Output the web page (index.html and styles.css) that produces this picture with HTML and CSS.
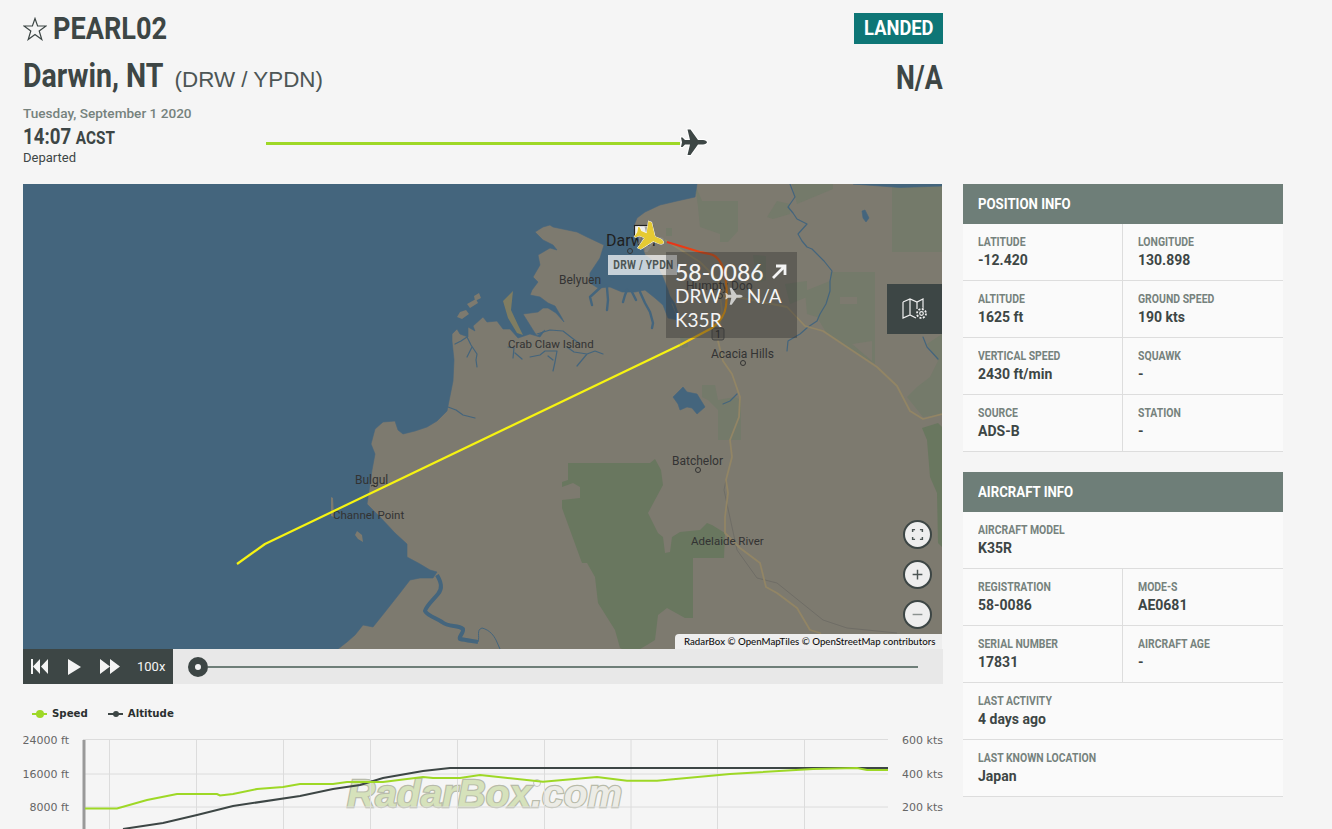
FILE: index.html
```html
<!DOCTYPE html>
<html lang="en">
<head>
<meta charset="utf-8">
<title>PEARL02 flight</title>
<link rel="stylesheet" href="styles.css">
</head>
<body>
<svg class="defs" width="0" height="0" aria-hidden="true">
  <symbol id="plane" viewBox="679 128 30 30">
    <path d="M707 143.300c0-1-2-2.200-4-2.200L698 141l-7.500-10.500h-3L690 141h-5l-2.500-2.500H681l1 4.800-1 4.700h1.500l2.500-2.500h5L687.500 156h3l7.500-10.500 5 0c2 0 4-1 4-2.200z"/>
  </symbol>
</svg>
<div class="page">
  <header class="head">
    <div class="row row-title">
      <h1 class="callsign">
        <svg class="star" viewBox="0 0 24 24"><polygon points="12,1.500 14.600,9 23,9 16.200,14 18.800,22.500 12,17.400 5.200,22.500 7.800,14 1,9 9.400,9"/></svg>
        <span class="cond">PEARL02</span>
      </h1>
      <span class="badge"><span class="badge-text">LANDED</span></span>
    </div>
    <div class="row row-route">
      <div class="origin"><span class="city cond">Darwin, NT</span><span class="codes">(DRW / YPDN)</span></div>
      <div class="city city-end">N/A</div>
    </div>
    <div class="date">Tuesday, September 1 2020</div>
    <div class="progress-row">
      <div class="dep">
        <div class="time">14:07 <span class="tz">ACST</span></div>
        <div class="dep-label">Departed</div>
      </div>
      <div class="progress-line"></div>
      <svg class="progress-plane"><use href="#plane"/></svg>
    </div>
  </header>

  <main class="main">
    <section class="map">
      <svg class="map-svg" viewBox="23 184 919 465">
        <rect class="land" x="23" y="184" width="919" height="465"/>
        <g class="park">
          <path d="M568 463H650L655 459L661 470L663 485L648 513L658 533L663 537L665 553L670 552L672 537L680 532L700 530L707 523L712 525L725 533L724 558H693V618H685L667 608L658 615L655 640L647 645L640 649H622L620 648L615 630L598 603L595 577L587 563H582L562 508V500L580 498V487L573 483L562 487V482L568 480Z"/>
          <path d="M922 428L938 423L942 427V547L938 543L937 493L930 477L927 440Z"/>
        </g>
        <g class="park park-soft">
          <path d="M702 385H715L718 400L735 397L741 400V440H718V410L708 400L702 397Z"/>
          <path d="M695 184L702 201H738V231L728 242H720V234L700 227L698 207Z"/>
          <path d="M792 184H833V189L797 204Z"/>
          <path d="M767 217L777 201L790 204V214L773 219Z"/>
          <path d="M892 186H942V252H892Z"/>
          <path d="M830 272H875V364L850 349L827 334L817 317L807 314L805 291L830 281Z"/>
          <path d="M785 284L807 281V297L790 304Z"/>
          <path d="M927 344L938 361L930 377L917 387L907 397L923 417L942 414V334Z"/>
          <path d="M753 255L766 256V280L757 283Z"/>
          <path d="M680 337L688 338V347L682 348Z"/>
          <path d="M666 228H672V236H666Z"/>
        </g>
        <path class="land" d="M840 297H857V304H840Z"/>
        <path class="land" d="M852 344L872 341V361Z"/>

        <path class="water" d="M23 184H697L695 197L677 201L660 205L645 212L637 218L633 228L640 240L645 255L655 262L662 275L668 290L672 305L678 320L668 318L663 305L655 298L645 290L635 292L622 292L610 287L598 288L590 283L590 273L600 258L604 245L587 237L577 232L553 227L550 225L543 227L535 232L543 240L553 245L557 250L550 248L538 255L540 265L533 277L538 282L532 290L530 295L540 297L548 303L555 306L562 318L564 322L556 313L548 308L543 308L538 312L523 314L528 322L533 330L537 336L545 330L540 337L530 334L518 338L510 329L503 329L497 321L487 322L483 317L473 326L475 331L468 327L468 337L460 334L457 329L452 334L452 341L454 360L453 381L447 411L437 421L427 427L415 431L403 434L398 430L395 421L383 422L375 429L371 444L375 454L372 470L370 484L367 504L380 517L395 533L407 544L407 557L420 564L430 570L437 572L433 578L420 578L410 580L400 593L385 612L373 627L363 625L355 635L347 642L338 649H23Z"/>
        <path class="water" d="M853 184H942V186L900 187.500Z"/>
        <path class="water" d="M673 397L683 387L687 392L697 394L705 407L697 414L692 408L687 407L680 410L678 404Z"/>
        <path class="water" d="M862 211L865 210L869 218L866 222L863 218Z"/>
        <path class="land" d="M460 312L466 310L469 314L462 319L457 317ZM467 304L476 299L478 303L470 308ZM474 296L479 293L481 298L475 301ZM357 531L362 535L363 542L358 539L355 535ZM331 497L333 498L334 517L331 516Z"/>
        <path class="mud" d="M503 301L513 291L511 310L518 325L523 335L517 333L508 318Z"/>

        <g class="river">
          <path d="M455 344L461 341L467 337L471 345L477 354L476 360L477 367M467 357L472 347M508 347L514 348L513 358M515 353L522 359M530 357L540 355L545 351L557 351L555 362L553 371M548 356L553 360M567 347L574 352L587 354L582 360L577 366M587 354L595 351L603 354M537 334L550 330L563 331L572 338L580 344M448 407L456 410L463 415L475 418M723 404L730 401L737 394"/>
          <path d="M790 184L795 197L788 207L793 213L797 219L807 224L798 234L802 241L807 247L812 249L817 254L824 261L832 271L830 281L830 291L826 304L820 314L817 321L808 327L800 334L788 341L787 351M923 337L927 347L938 359"/>
        </g>
        <path class="inlet" d="M640 292L645 303L650 312L653 323L652 328M627 290L625 295L623 302M607 288L608 300L607 310M613 277L603 285L590 297L592 305M632 292L636 300M668 295L674 304L678 316"/>
        <path class="river-wide" d="M437 575C441 582 443 588 438 594C433 600 426 606 425 611C428 616 436 618 442 622C449 628 458 624 463 629C464 633 458 637 460 639C465 640 472 641 478 642"/>
        <path class="river-thin" d="M478 642C480 636 476 630 482 628C490 630 494 636 496 640L500 649"/>
        <path class="rail" d="M737 550L757 578L777 583L823 620L847 628L897 633M726 480L724 490L737 550"/>
        <g class="road">
          <path d="M665 240L700 262L718 280L722 310L718 341L723 361L732 374L740 397L739 417L730 440L732 457L726 480L728 493L725 517L725 533L740 548L760 563L766 587L777 593L797 608L810 630L820 633L827 649"/>
          <path d="M722 296L737 297L787 307L805 326L823 331L847 347L877 367L897 386L910 411L923 419L942 414"/>
        </g>
        <g class="labels">
          <text x="559" y="284">Belyuen</text>
          <text class="label-s" x="508" y="348">Crab Claw Island</text>
          <text x="355" y="484">Bulgul</text>
          <text class="label-s" x="333" y="519">Channel Point</text>
          <text x="711" y="358">Acacia Hills</text>
          <text x="672" y="465">Batchelor</text>
          <text class="label-s" x="691" y="545">Adelaide River</text>
          <text x="686" y="290">Humpty Doo</text>
          <text class="label-city" x="606" y="246">Darwin</text>
        </g>
        <g class="dots">
          <circle cx="630" cy="251" r="2.500"/>
          <circle cx="743" cy="363" r="2.500"/>
          <circle cx="698" cy="470" r="2.500"/>
          <circle cx="720" cy="296" r="2.500"/>
          <path d="M371 486a3 3 0 0 1 4 0"/>
        </g>
        <rect class="shield" x="712" y="328" width="12" height="12" rx="2"/>
        <text class="shield-text" x="718" y="338">1</text>
        <defs>
          <linearGradient id="track" gradientUnits="userSpaceOnUse" x1="690" y1="345" x2="680" y2="240">
            <stop offset="0" stop-color="#f2e012"/>
            <stop offset=".1" stop-color="#f5b208"/>
            <stop offset=".5" stop-color="#dd7a0a"/>
            <stop offset=".85" stop-color="#e8480f"/>
            <stop offset="1" stop-color="#e8301a"/>
          </linearGradient>
        </defs>
        <path class="track-y" d="M237 564L265 544L680 345"/>
        <path class="track-g" d="M680 345L712 328C720 322 725 315 726 306C727 298 727 290 726 282C725 270 722 260 713 255C708 253 704 253 700 252L667 242"/>
        <rect class="apt-box" x="634.500" y="225.500" width="18" height="11"/>
        <use class="plane-shadow" href="#plane" x="636" y="224" width="30" height="30"/>
        <use class="plane-map" href="#plane" x="633" y="220" width="34" height="34" transform="rotate(22 650 237)"/>
      </svg>
      <div class="airport-tag"><span class="tag-text">DRW / YPDN</span></div>
      <div class="flight-tip">
        <div class="tip-reg">58-0086 <svg class="tip-arrow" viewBox="0 0 16 16"><path d="M2 14L14 2M5 2H14V11"/></svg></div>
        <div class="tip-line">DRW <svg class="tip-plane"><use href="#plane"/></svg> N/A</div>
        <div class="tip-line">K35R</div>
      </div>
      <button class="map-settings" aria-label="Map settings">
        <svg viewBox="0 0 26 22"><path d="M1 4L8 1L15 4L21 1V10M8 1V17M15 4V11M1 4V20L8 17L14 20"/><circle class="gear-bg" cx="19.500" cy="15.500" r="6"/><circle class="gear" cx="19.500" cy="15.500" r="4.500"/><circle cx="19.500" cy="15.500" r="1.800"/></svg>
      </button>
      <div class="zoom-stack">
        <button class="round" aria-label="Full screen"><svg viewBox="0 0 16 16"><path d="M2 5V2H5M11 2H14V5M14 11V14H11M5 14H2V11"/></svg></button>
        <button class="round" aria-label="Zoom in"><svg viewBox="0 0 16 16"><path d="M8 2V14M2 8H14"/></svg></button>
        <button class="round round-faint" aria-label="Zoom out"><svg viewBox="0 0 16 16"><path d="M2 8H14"/></svg></button>
      </div>
      <div class="attrib">RadarBox © OpenMapTiles © OpenStreetMap contributors</div>
    </section>

    <div class="player">
      <div class="player-btns">
        <svg class="pb pb-rew" viewBox="0 0 18 15"><path d="M0 0H2V15H0ZM9 0V15L2 7.500ZM17 0V15L10 7.500Z"/></svg>
        <svg class="pb pb-play" viewBox="0 0 13 16"><path d="M0 0L13 8L0 16Z"/></svg>
        <svg class="pb pb-ff" viewBox="0 0 20 15"><path d="M0 0L10 7.500L0 15ZM10 0L20 7.500L10 15Z"/></svg>
        <span class="speed">100x</span>
      </div>
      <div class="slider">
        <span class="knob"></span>
        <span class="rail-line"></span>
      </div>
    </div>

    <div class="legend">
      <span class="key"><i class="swatch swatch-green"></i>Speed</span>
      <span class="key"><i class="swatch swatch-dark"></i>Altitude</span>
    </div>

    <svg class="chart" viewBox="23 725 920 104">
      <text class="wm" x="347" y="807">Radar<tspan class="wm-box">Box</tspan><tspan class="wm-dot">.com</tspan></text>
      <circle class="wm-reg" cx="537" cy="783" r="3.500"/>
      <g class="grid">
        <path d="M83 739.500H888M83 774H888M83 807H888"/>
        <path d="M109.500 740V829M196.500 740V829M283.500 740V829M370.500 740V829M457.500 740V829M544.500 740V829M631 740V829M717.500 740V829M804.500 740V829"/>
      </g>
      <path class="axis" d="M84 740V829"/>
      <path class="line-alt" d="M123 829L163 823L197 815L233 806L300 796L333 789L360 785L383 778L423 771L450 768H888"/>
      <path class="line-speed" d="M85 808.500H117L147 800L177 794H217L220 795.500L233 794L257 789L283 787L300 784H333L347 782H383L423 777L433 778H460L480 775L543 781.700L597 777L627 780.700H657L730 774L813 769L857 768L867 770H888"/>
      <g class="ticks">
        <text x="69" y="744" text-anchor="end">24000 ft</text>
        <text x="69" y="778" text-anchor="end">16000 ft</text>
        <text x="69" y="811" text-anchor="end">8000 ft</text>
        <text x="943" y="744" text-anchor="end">600 kts</text>
        <text x="943" y="778" text-anchor="end">400 kts</text>
        <text x="943" y="811" text-anchor="end">200 kts</text>
      </g>
    </svg>
  </main>

  <aside class="side">
    <section class="panel">
      <h2 class="panel-head"><span class="head-text">POSITION INFO</span></h2>
      <div class="cells">
        <div class="cell cell-l"><div class="k">LATITUDE</div><div class="v">-12.420</div></div>
        <div class="cell"><div class="k">LONGITUDE</div><div class="v">130.898</div></div>
        <div class="cell cell-l"><div class="k">ALTITUDE</div><div class="v">1625 ft</div></div>
        <div class="cell"><div class="k">GROUND SPEED</div><div class="v">190 kts</div></div>
        <div class="cell cell-l"><div class="k">VERTICAL SPEED</div><div class="v">2430 ft/min</div></div>
        <div class="cell"><div class="k">SQUAWK</div><div class="v">-</div></div>
        <div class="cell cell-l"><div class="k">SOURCE</div><div class="v">ADS-B</div></div>
        <div class="cell"><div class="k">STATION</div><div class="v">-</div></div>
      </div>
    </section>
    <section class="panel">
      <h2 class="panel-head"><span class="head-text">AIRCRAFT INFO</span></h2>
      <div class="cells">
        <div class="cell cell-wide"><div class="k">AIRCRAFT MODEL</div><div class="v">K35R</div></div>
        <div class="cell cell-l"><div class="k">REGISTRATION</div><div class="v">58-0086</div></div>
        <div class="cell"><div class="k">MODE-S</div><div class="v">AE0681</div></div>
        <div class="cell cell-l"><div class="k">SERIAL NUMBER</div><div class="v">17831</div></div>
        <div class="cell"><div class="k">AIRCRAFT AGE</div><div class="v">-</div></div>
        <div class="cell cell-wide"><div class="k">LAST ACTIVITY</div><div class="v">4 days ago</div></div>
        <div class="cell cell-wide"><div class="k">LAST KNOWN LOCATION</div><div class="v">Japan</div></div>
      </div>
    </section>
  </aside>
</div>
</body>
</html>
```

FILE: styles.css
```css
* { box-sizing: border-box; }
html, body { margin: 0; height: 829px; overflow: hidden; background: #f5f5f5; }
body { font-family: "Roboto", "Liberation Sans", sans-serif; color: #3d4645; }
.defs { position: absolute; }

.page {
  display: grid;
  grid-template-columns: 920px 320px;
  grid-template-rows: 184px auto;
  column-gap: 20px;
  padding-left: 23px;
}
.head { grid-column: 1; grid-row: 1; padding-top: 13px; }
.main { grid-column: 1; grid-row: 2; }
.side { grid-column: 2; grid-row: 2; display: flex; flex-direction: column; gap: 20px; }

.row { display: flex; justify-content: space-between; }
.row-title { height: 31px; align-items: center; }
.cond { display: inline-block; transform: scaleX(.875); transform-origin: 0 50%; }
.callsign {
  margin: 0; display: flex; align-items: center; gap: 6px;
  font: 700 31px/31px "Roboto", sans-serif;
  color: #3d4645;
}
.star { width: 24px; height: 24px; fill: none; stroke: #3d4645; stroke-width: 1.2; }
.badge {
  width: 89px; height: 31px; background: #0e7676; color: #fff; text-align: center;
  font: 700 21px/31px "Roboto", sans-serif;
}
.badge-text { display: inline-block; transform: scaleX(.873); }
.row-route { margin-top: 16px; height: 36px; align-items: center; }
.origin { display: flex; align-items: baseline; }
.city { font: 700 33px/36px "Roboto", sans-serif; color: #3d4645; }
.origin .city { margin-right: -11px; transform: scaleX(.864); }
.city-end { transform: scaleX(.81); transform-origin: 100% 50%; }
.codes { font: 400 22.400px/36px "Liberation Sans", sans-serif; color: #4d5655; }
.date { margin-top: 9px; font: 500 13.600px/17px "Roboto", sans-serif; color: #76827d; }
.progress-row { display: flex; align-items: center; margin-top: 2px; }
.dep { width: 243px; }
.time { font: 700 22px/25px "Roboto", sans-serif; color: #3d4645; transform: scaleX(.85); transform-origin: 0 50%; white-space: nowrap; }
.tz { font-size: 18px; }
.dep-label { font: 400 13px/15px "Roboto", sans-serif; color: #3d4645; }
.progress-line { width: 414px; height: 3px; background: #9ed826; margin-top: -3px; }
.progress-plane {
  width: 30px; height: 30px; margin-top: -5px; fill: #3d4645; stroke: #fff; stroke-width: 2; paint-order: stroke;
  overflow: visible; margin-left: -1px;
}

.map { position: relative; width: 919px; height: 465px; overflow: hidden; }
.map-svg { display: block; width: 919px; height: 465px; }
.land { fill: #7d7a6f; }
.park path { fill: #69775f; }
.park-soft path { fill: #747a6a; }
.water { fill: #44657d; stroke: #44657d; stroke-width: .6; stroke-linejoin: round; }
.mud { fill: #7f7d62; }
.river path { fill: none; stroke: #44657d; stroke-width: 1.200; stroke-linejoin: round; stroke-linecap: round; }
.inlet { fill: none; stroke: #44657d; stroke-width: 2.400; stroke-linejoin: round; stroke-linecap: round; }
.river-wide { fill: none; stroke: #44657d; stroke-width: 4; stroke-linejoin: round; }
.river-thin { fill: none; stroke: #44657d; stroke-width: 1; }
.rail { fill: none; stroke: #6f6d66; stroke-width: 1; }
.road path { fill: none; stroke: #928565; stroke-width: 1.800; stroke-linejoin: round; }
.labels text { font: 400 12px "Roboto", sans-serif; fill: #333; }
.labels .label-s { font-size: 11.500px; }
.labels .label-city { font-size: 16px; fill: #1f1f1f; }
.dots circle { fill: none; stroke: #333; stroke-width: 1; }
.dots path { fill: none; stroke: #333; stroke-width: 1; }
.shield { fill: #6b685f; stroke: #444; stroke-width: 1; }
.shield-text { font: 400 10px "Roboto", sans-serif; fill: #222; text-anchor: middle; }
.track-y { fill: none; stroke: #f6f312; stroke-width: 2.200; stroke-linejoin: round; }
.track-g { fill: none; stroke: url(#track); stroke-width: 2.200; stroke-linejoin: round; }
.apt-box { fill: #eee; stroke: #222; stroke-width: 1.200; }
.plane-shadow { fill: #8a8a86; opacity: .7; }
.plane-map { fill: #e6ca33; stroke: #fff; stroke-width: .8; paint-order: stroke; }

.airport-tag {
  position: absolute; left: 585px; top: 71px; width: 69px; height: 20px;
  background: rgba(255, 255, 255, .7); color: #4d5655; text-align: center; white-space: nowrap;
  font: 700 12px/21px "Roboto", sans-serif; letter-spacing: .3px;
}
.tag-text { display: inline-block; transform: scaleX(.85); }
.flight-tip {
  position: absolute; left: 643px; top: 68px; width: 131px; height: 86px;
  background: rgba(50, 50, 50, .4); color: #f4f4f4; padding: 8px 0 0 9px;
  font-family: "Lato", sans-serif;
}
.tip-reg { font-size: 23px; line-height: 24px; font-weight: 500; display: flex; align-items: center; gap: 7px; }
.tip-arrow { width: 16px; height: 16px; fill: none; stroke: #f4f4f4; stroke-width: 2.800; }
.tip-line { font-size: 19px; line-height: 24px; display: flex; align-items: center; gap: 3px; }
.tip-plane { width: 20px; height: 20px; fill: #e8e8e8; opacity: .8; }
.map-settings {
  position: absolute; left: 864px; top: 100px; width: 55px; height: 50px; border: 0; padding: 0;
  background: #3d4645; display: flex; align-items: center; justify-content: center;
}
.map-settings svg { width: 26px; height: 22px; fill: none; stroke: #f0f0f0; stroke-width: 1.200; margin-left: 1px; }
.gear-bg { fill: #3d4645; stroke: none; }
.gear { stroke-dasharray: 2 1.500; stroke-width: 1.800; }
.zoom-stack {
  position: absolute; right: 10px; top: 336px; display: flex; flex-direction: column; gap: 11px;
}
.round {
  width: 29px; height: 29px; border-radius: 50%; border: 2px solid #3d4645; background: #eee; padding: 0;
  display: flex; align-items: center; justify-content: center;
}
.round svg { width: 13px; height: 13px; fill: none; stroke: #4d5655; stroke-width: 1.800; }
.round-faint svg { stroke: #8b9290; }
.attrib {
  position: absolute; right: 0; bottom: 0; width: 267px; height: 15px; padding-left: 9px;
  background: #eee; border-top-left-radius: 4px; color: #111; white-space: nowrap;
  font: 500 9.700px/15px "Lato", sans-serif;
}

.player { display: flex; height: 35px; width: 920px; background: #e8e8e8; }
.player-btns { width: 150px; height: 35px; background: #3d4645; position: relative; display: flex; align-items: center; padding-left: 8px; }
.pb { fill: #f4f4f4; display: block; }
.pb-rew { width: 18px; height: 15px; }
.pb-play { width: 13px; height: 16px; margin-left: 19px; }
.pb-ff { width: 20px; height: 15px; margin-left: 19px; }
.speed { margin-left: 17px; font: 400 13px/35px "Roboto", sans-serif; color: #f4f4f4; }
.slider { position: relative; flex: 1; display: flex; align-items: center; padding-left: 15px; }
.knob { width: 20px; height: 20px; border-radius: 50%; border: 7px solid #3d4645; background: #f4f4f4; flex: none; }
.rail-line { width: 710px; height: 2px; background: #6e7e78; }

.legend { display: flex; gap: 20px; margin-top: 22px; padding-left: 9px; height: 16px; align-items: center; }
.key { display: flex; align-items: center; gap: 5px; font: 700 10.200px/16px "DejaVu Sans", sans-serif; color: #2a2f2f; }
.swatch { width: 15px; height: 2px; position: relative; display: block; }
.swatch::after { content: ""; position: absolute; left: 4px; top: -3px; width: 8px; height: 8px; border-radius: 50%; background: inherit; }
.swatch-green { background: #9ed826; }
.swatch-dark { background: #3d4645; }
.swatch-dark::after { left: 5px; top: -2px; width: 6px; height: 6px; }

.chart { display: block; width: 920px; height: 104px; margin-top: 3px; overflow: hidden; }
.grid path { fill: none; stroke: #dcdcdc; stroke-width: 1; }
.axis { fill: none; stroke: #999; stroke-width: 3; }
.wm { font: italic 700 39px "Liberation Sans", sans-serif; fill: #d6e2bb; stroke: #b8bbaa; stroke-width: 2.400; paint-order: stroke; }
.wm-dot { fill: #ecece6; }
.wm-reg { fill: none; stroke: #c4c4c4; stroke-width: 1; }
.line-alt { fill: none; stroke: #3d4645; stroke-width: 2; }
.line-speed { fill: none; stroke: #9ed826; stroke-width: 2; }
.ticks text { font: 400 11px "DejaVu Sans", sans-serif; fill: #666; }

.panel { background: #fafafa; }
.panel-head {
  margin: 0; height: 40px; padding-left: 15px; background: #6e7e78; color: #fff;
  font: 700 15px/40px "Roboto", sans-serif;
}
.head-text { display: inline-block; transform: scaleX(.88); transform-origin: 0 50%; }
.cells { display: grid; grid-template-columns: 160px 160px; }
.cell { height: 57px; padding: 11px 0 0 15px; border-bottom: 1px solid #ddd; }
.cell-l { border-right: 1px solid #ddd; }
.cell-wide { grid-column: 1 / -1; }
.k { font: 700 12px/14px "Roboto", sans-serif; color: #76827d; transform: scaleX(.87); transform-origin: 0 50%; white-space: nowrap; }
.v { margin-top: 2px; font: 700 14px/18px "Roboto", sans-serif; color: #3d4645; }
```
